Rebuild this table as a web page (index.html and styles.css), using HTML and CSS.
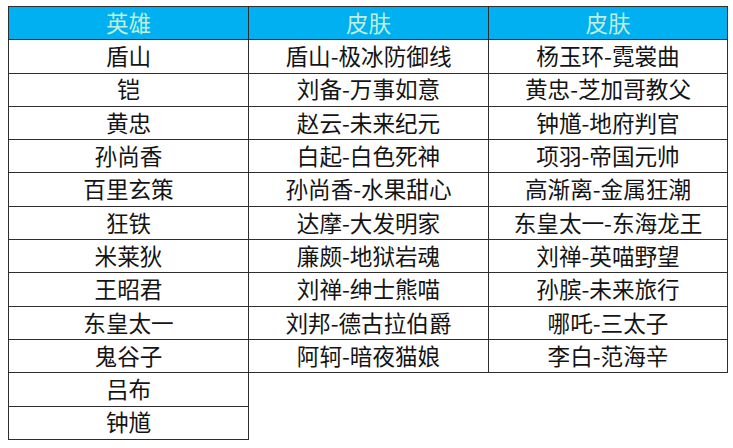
FILE: index.html
```html
<!DOCTYPE html>
<html lang="zh-CN">
<head>
<meta charset="utf-8">
<link rel="stylesheet" href="styles.css">
</head>
<body>
<table class="grid">
  <colgroup><col class="c1"><col class="c2"><col class="c3"></colgroup>
  <thead>
    <tr><th>英雄</th><th>皮肤</th><th>皮肤</th></tr>
  </thead>
  <tbody>
    <tr><td>盾山</td><td>盾山-极冰防御线</td><td>杨玉环-霓裳曲</td></tr>
    <tr><td>铠</td><td>刘备-万事如意</td><td>黄忠-芝加哥教父</td></tr>
    <tr><td>黄忠</td><td>赵云-未来纪元</td><td>钟馗-地府判官</td></tr>
    <tr><td>孙尚香</td><td>白起-白色死神</td><td>项羽-帝国元帅</td></tr>
    <tr><td>百里玄策</td><td>孙尚香-水果甜心</td><td>高渐离-金属狂潮</td></tr>
    <tr><td>狂铁</td><td>达摩-大发明家</td><td>东皇太一-东海龙王</td></tr>
    <tr><td>米莱狄</td><td>廉颇-地狱岩魂</td><td>刘禅-英喵野望</td></tr>
    <tr><td>王昭君</td><td>刘禅-绅士熊喵</td><td>孙膑-未来旅行</td></tr>
    <tr><td>东皇太一</td><td>刘邦-德古拉伯爵</td><td>哪吒-三太子</td></tr>
    <tr><td>鬼谷子</td><td>阿轲-暗夜猫娘</td><td>李白-范海辛</td></tr>
    <tr><td>吕布</td><td class="empty"></td><td class="empty"></td></tr>
    <tr><td>钟馗</td><td class="empty"></td><td class="empty"></td></tr>
  </tbody>
</table>
</body>
</html>
```
FILE: styles.css
```css
html, body {
  margin: 0;
  padding: 0;
  background: #ffffff;
}
body {
  padding: 6px 0 0 8px;
  font-family: "Noto Sans CJK SC", "Noto Sans", sans-serif;
}
.grid {
  border-collapse: collapse;
  table-layout: fixed;
  width: 719px;
}
.c1 { width: 240px; }
.c2 { width: 240px; }
.c3 { width: 239px; }
.grid tr {
  height: 33.3px;
}
.grid th,
.grid td {
  border: 1px solid #2e2e2e;
  padding: 0;
  text-align: center;
  vertical-align: middle;
  font-size: 22.6px;
  line-height: 1;
  color: #141414;
  font-weight: normal;
  white-space: nowrap;
}
.grid th {
  background: #00b0f0;
  color: #bfeede;
}
.grid td.empty {
  border: none;
}
```
